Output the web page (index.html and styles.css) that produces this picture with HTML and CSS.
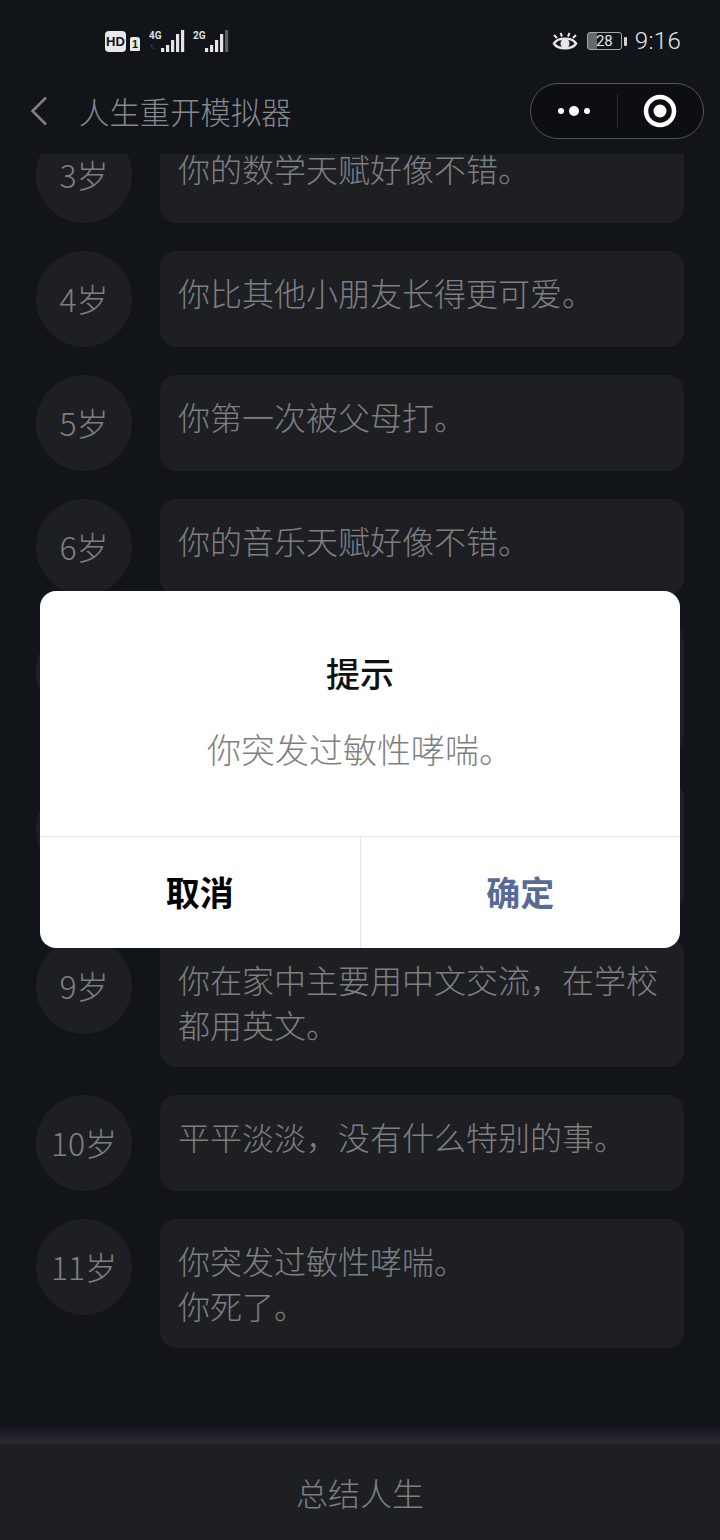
FILE: index.html
```html
<!DOCTYPE html>
<html lang="zh">
<head>
<meta charset="utf-8">
<title>人生重开模拟器</title>
<link rel="stylesheet" href="styles.css">
</head>
<body>
<div class="phone">
  <header class="top">
    <div class="status">
      <div class="status-left">
        <span class="hd">HD</span>
        <span class="sim">1</span>
        <div class="net">
          <div class="net-labels"><span class="net-type">4G</span><span class="net-arrows">↑↓</span></div>
          <svg class="bars" width="24" height="22" viewBox="0 0 24 22"><rect x="0" y="18" width="3.200" height="4" fill="#e4e5e6"/><rect x="5" y="15" width="3.200" height="7" fill="#e4e5e6"/><rect x="10" y="10" width="3.200" height="12" fill="#e4e5e6"/><rect x="15" y="4" width="3.200" height="18" fill="#e4e5e6"/><rect x="20" y="0" width="3.200" height="22" fill="#e4e5e6"/></svg>
        </div>
        <div class="net net-second">
          <div class="net-labels"><span class="net-type">2G</span></div>
          <svg class="bars" width="24" height="22" viewBox="0 0 24 22"><rect x="0" y="18" width="3.200" height="4" fill="#e4e5e6"/><rect x="5" y="15" width="3.200" height="7" fill="#e4e5e6"/><rect x="10" y="10" width="3.200" height="12" fill="#e4e5e6"/><rect x="15" y="4" width="3.200" height="18" fill="#e4e5e6"/><rect x="20" y="0" width="3.200" height="22" fill="#5d6063"/></svg>
        </div>
      </div>
      <div class="status-right">
        <svg class="eye" width="26" height="22" viewBox="0 0 26 22"><path d="M2 5 5 8M8.500 3 10 6.500M17.500 3 16 6.500M24 5 21 8" stroke="#e6e7e8" stroke-width="2" fill="none"/><path d="M2 13.500C6 7 20 7 24 13.500 20 20 6 20 2 13.500Z" stroke="#e6e7e8" stroke-width="2.400" fill="none"/><circle cx="13" cy="13.500" r="4.500" fill="#e6e7e8"/></svg>
        <div class="battery"><span class="battery-num">28</span></div>
        <span class="battery-tip"></span>
        <span class="clock">9:16</span>
      </div>
    </div>
    <nav class="nav">
      <svg class="back" width="18" height="30" viewBox="0 0 18 30"><path d="M16 1.500 2.500 15 16 28.500" stroke="#7d7f81" stroke-width="2.600" fill="none"/></svg>
      <h1 class="title">人生重开模拟器</h1>
      <div class="capsule">
        <div class="capsule-half">
          <svg width="38" height="12" viewBox="0 0 38 12"><circle cx="6" cy="6" r="3" fill="#fff"/><circle cx="19" cy="6" r="5" fill="#fff"/><circle cx="32" cy="6" r="3" fill="#fff"/></svg>
        </div>
        <span class="capsule-line"></span>
        <div class="capsule-half">
          <svg width="34" height="34" viewBox="0 0 34 34"><circle cx="17" cy="17" r="14" stroke="#fff" stroke-width="4.500" fill="none"/><circle cx="17" cy="17" r="6.500" fill="#fff"/></svg>
        </div>
      </div>
    </nav>
  </header>

  <main class="list-view">
    <ul class="list">
      <li class="row"><span class="age">3岁</span><p class="card">你的数学天赋好像不错。</p></li>
      <li class="row"><span class="age">4岁</span><p class="card">你比其他小朋友长得更可爱。</p></li>
      <li class="row"><span class="age">5岁</span><p class="card">你第一次被父母打。</p></li>
      <li class="row"><span class="age">6岁</span><p class="card">你的音乐天赋好像不错。</p></li>
      <li class="row"><span class="age"></span><p class="card card-tall"></p></li>
      <li class="row"><span class="age"></span><p class="card card-tall"></p></li>
      <li class="row"><span class="age">9岁</span><p class="card">你在家中主要用中文交流，在学校都用英文。</p></li>
      <li class="row"><span class="age">10岁</span><p class="card">平平淡淡，没有什么特别的事。</p></li>
      <li class="row"><span class="age">11岁</span><p class="card">你突发过敏性哮喘。<br>你死了。</p></li>
    </ul>
  </main>

  <footer class="bottom">
    <div class="bottom-glow"></div>
    <div class="bottom-bar">总结人生</div>
  </footer>

  <div class="overlay">
    <div class="modal">
      <div class="modal-body">
        <h2 class="modal-title">提示</h2>
        <p class="modal-text">你突发过敏性哮喘。</p>
      </div>
      <div class="modal-actions">
        <button class="btn btn-cancel">取消</button>
        <button class="btn btn-ok">确定</button>
      </div>
    </div>
  </div>
</div>
</body>
</html>
```
FILE: styles.css
```css
* { box-sizing: border-box; }
html, body { margin: 0; padding: 0; }
body {
  background: #111418;
  font-family: "Noto Sans CJK SC", "Noto Sans", sans-serif;
  color: #7e7f82;
}
.phone {
  position: relative;
  width: 720px;
  height: 1540px;
  display: flex;
  flex-direction: column;
  overflow: hidden;
}

/* top */
.top { flex: none; position: relative; z-index: 1; height: 154px; background: #111418; }
.status {
  height: 83px;
  padding: 28px 39px 0 105px;
  display: flex;
  justify-content: space-between;
  align-items: flex-start;
  color: #e4e5e6;
}
.status-left { display: flex; align-items: center; height: 26px; }
.hd {
  width: 21px; height: 21px;
  border-radius: 4px;
  background: #e8e9ea;
  color: #111418;
  font: 700 13px/21px "Liberation Sans", sans-serif;
  text-align: center;
}
.sim {
  width: 10px; height: 14px;
  margin: 6px 0 0 4px;
  border-radius: 2px 3px 1px 1px;
  background: #e8e9ea;
  color: #111418;
  font: 700 11px/14px "Liberation Sans", sans-serif;
  text-align: center;
}
.net { display: flex; align-items: flex-end; margin-left: 9px; height: 24px; }
.net-second { margin-left: 8px; }
.net-labels { display: flex; flex-direction: column; width: 12px; height: 23px; }
.net-type { font: 700 10px/12px "Roboto", sans-serif; color: #dfe0e1; }
.net-arrows { font: 700 8px/9px "Liberation Sans", sans-serif; color: #55585b; letter-spacing: -2px; }
.bars { display: block; margin-bottom: 1px; }
.status-right { display: flex; align-items: center; height: 26px; }
.eye { margin-right: 9px; margin-left: 2px; }
.battery {
  width: 35px; height: 18px;
  border: 1.500px solid #a4a6a8;
  border-radius: 3px;
  background: linear-gradient(90deg, #66696c 0 28%, transparent 28%);
  display: flex; align-items: center; justify-content: center;
}
.battery-num { font: 400 15px/16px "Roboto", sans-serif; color: #e4e5e6; }
.battery-tip { width: 3px; height: 9px; margin: 0 8px 0 2px; background: #d0d1d2; border-radius: 1px; }
.clock { font: 300 24px/26px "Roboto", sans-serif; color: #e4e5e6; letter-spacing: .3px; }

.nav { height: 71px; display: flex; align-items: flex-start; padding-left: 30px; }
.back { margin-top: 13px; flex: none; }
.title {
  margin: 6px 0 0 31px;
  font-size: 30.400px;
  line-height: 44px;
  font-weight: 300;
  color: #87898b;
}
.capsule {
  margin-left: auto;
  margin-right: 16px;
  width: 174px; height: 56px;
  border: 1px solid #54575a;
  border-radius: 28px;
  background: #0c0e11;
  display: flex;
  align-items: center;
}
.capsule-half { flex: 1; display: flex; align-items: center; justify-content: center; }
.capsule-line { width: 1px; height: 34px; background: #2a2c30; flex: none; }

/* list */
.list-view { flex: 1; min-height: 0; overflow: hidden; }
.list {
  list-style: none;
  margin: -27px 0 0;
  padding: 0 36px;
  display: flex;
  flex-direction: column;
  gap: 28px;
}
.row { display: flex; align-items: flex-start; gap: 28px; }
.age {
  flex: none;
  width: 96px; height: 96px;
  padding-bottom: 2px;
  border-radius: 50%;
  background: #1e1f23;
  display: flex; align-items: center; justify-content: center;
  font-size: 32px;
  font-weight: 300;
  color: #7e7f82;
}
.card {
  flex: 1;
  margin: 0;
  min-height: 96px;
  padding: 19px 18px 20px;
  border-radius: 16px;
  background: #1e1f23;
  font-size: 32px;
  font-weight: 300;
  line-height: 45px;
  color: #7e7f82;
}
.card-tall { min-height: 129.500px; }

/* bottom */
.bottom { flex: none; height: 116px; position: relative; display: flex; flex-direction: column; justify-content: flex-end; }
.bottom-glow { height: 20px; background: linear-gradient(180deg, rgba(36,36,48,0), #2a2a34); }
.bottom-bar {
  height: 96px;
  background: #1e1f23;
  display: flex; align-items: center; justify-content: center;
  font-size: 32px;
  font-weight: 300;
  color: #7e7f82;
}

/* modal */
.overlay {
  position: absolute;
  inset: 0;
  z-index: 2;
  display: flex;
  justify-content: center;
  padding-top: 591px;
}
.modal {
  width: 640px; height: 357px;
  background: #fff;
  border-radius: 16px;
  overflow: hidden;
  display: flex;
  flex-direction: column;
}
.modal-body { height: 245px; padding-top: 58px; text-align: center; }
.modal-title { margin: 0; font-size: 34px; line-height: 48px; font-weight: 500; color: #111; }
.modal-text { margin: 28px 0 0; font-size: 34px; font-weight: 300; line-height: 48px; color: #7f7f7f; }
.modal-actions { flex: 1; display: flex; border-top: 1px solid #e5e5e5; }
.btn {
  flex: 1;
  border: 0;
  background: none;
  padding: 0 0 2px;
  font-family: inherit;
  font-size: 34px;
  font-weight: 700;
  color: #000;
}
.btn-ok { color: #576b95; border-left: 1px solid #e5e5e5; }
```
